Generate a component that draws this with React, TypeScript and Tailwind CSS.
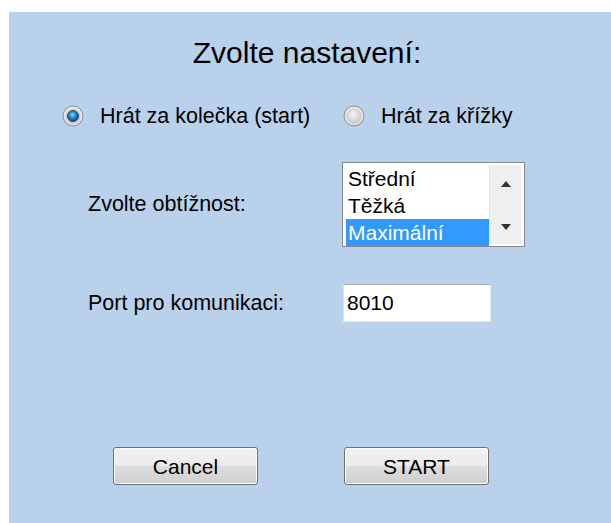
import React from 'react';

const font = { fontFamily: '"Liberation Sans", Arial, sans-serif' };

function Radio({ checked, label, id }: { checked?: boolean; label: string; id: string }) {
  return (
    <div className="flex items-center h-[24px]">
      <svg width="22" height="22" viewBox="0 0 22 22" className="shrink-0">
        <defs>
          <radialGradient id={`ring-${id}`} cx="50%" cy="40%" r="60%">
            <stop offset="0%" stopColor="#ffffff" />
            <stop offset="100%" stopColor="#d9d9d9" />
          </radialGradient>
          <radialGradient id={`well-${id}`} cx="45%" cy="40%" r="65%">
            <stop offset="0%" stopColor="#f4f4f4" />
            <stop offset="100%" stopColor="#c9c9c9" />
          </radialGradient>
          <radialGradient id={`dot-${id}`} cx="45%" cy="40%" r="60%">
            <stop offset="0%" stopColor="#8ed8ff" />
            <stop offset="45%" stopColor="#2a8fd8" />
            <stop offset="100%" stopColor="#0b3f78" />
          </radialGradient>
        </defs>
        <circle cx="11" cy="11" r="10" fill={`url(#ring-${id})`} stroke="#8e8f8f" strokeWidth="1" />
        <circle cx="11" cy="11" r="7" fill={`url(#well-${id})`} stroke="#b8b8b8" strokeWidth="0.6" />
        {checked && <circle cx="11" cy="11" r="5.5" fill={`url(#dot-${id})`} stroke="#1a3b5c" strokeWidth="0.8" />}
      </svg>
      <span className="ml-[16px] text-[21.5px] leading-[24px] text-black whitespace-nowrap">{label}</span>
    </div>
  );
}

function Button({ label, className }: { label: string; className?: string }) {
  return (
    <button
      className={`w-[145px] h-[38px] rounded-[3px] border border-[#707070] bg-[linear-gradient(to_bottom,#f2f2f2_0%,#ebebeb_50%,#dddddd_51%,#cfcfcf_100%)] shadow-[inset_0_0_0_1px_#fcfcfc] text-[21px] leading-none text-black ${className ?? ''}`}
      style={font}
    >
      {label}
    </button>
  );
}

const levels = ['Střední', 'Těžká', 'Maximální'];

export default function App() {
  return (
    <div className="w-[611px] h-[523px] bg-white pt-[12px] pl-[9px] flex" style={font}>
      <div className="flex-1 bg-[#b9d1ea] flex flex-col">
        <h1 className="pt-[26px] pr-[6px] text-center text-[30px] leading-[30px] font-normal text-black">
          Zvolte nastavení:
        </h1>

        {/* player choice */}
        <div className="mt-[36px] pl-[53px] flex">
          <div className="w-[281px]">
            <Radio id="o" checked label="Hrát za kolečka (start)" />
          </div>
          <Radio id="x" label="Hrát za křížky" />
        </div>

        {/* difficulty */}
        <div className="mt-[34px] pl-[79px] flex items-center">
          <span className="w-[254px] text-[21.5px] text-black">Zvolte obtížnost:</span>
          <div className="w-[183px] h-[85px] border border-[#828790] bg-white flex pt-[2px] pl-[3px] pr-[3px] pb-[2px]">
            <ul className="flex-1 flex flex-col">
              {levels.map((l, i) => (
                <li
                  key={l}
                  className={`h-[27px] leading-[27px] px-[2px] text-[21px] ${i === 2 ? 'bg-[#3399ff] text-white' : 'text-black'}`}
                >
                  {l}
                </li>
              ))}
            </ul>
            <div className="w-[32px] bg-[#efefef] border-l border-[#e2e2e2] flex flex-col items-center justify-between pt-[16px] pb-[14px]">
              <svg width="10" height="6" viewBox="0 0 10 6">
                <path d="M0 6 L5 0 L10 6 Z" fill="#333" />
              </svg>
              <svg width="10" height="6" viewBox="0 0 10 6">
                <path d="M0 0 L5 6 L10 0 Z" fill="#333" />
              </svg>
            </div>
          </div>
        </div>

        {/* port */}
        <div className="mt-[37px] pl-[79px] flex items-center">
          <span className="w-[255px] text-[21.5px] text-black">Port pro komunikaci:</span>
          <div className="w-[148px] h-[38px] bg-white border border-[#e3e9ef] border-t-[#abadb3] border-l-[#e2e3ea] flex items-center pl-[3px] text-[21px] text-black">
            8010
          </div>
        </div>

        {/* actions */}
        <div className="mt-[125px] pl-[104px] flex gap-[86px]">
          <Button label="Cancel" />
          <Button label="START" className="w-[144px]" />
        </div>
      </div>
    </div>
  );
}
